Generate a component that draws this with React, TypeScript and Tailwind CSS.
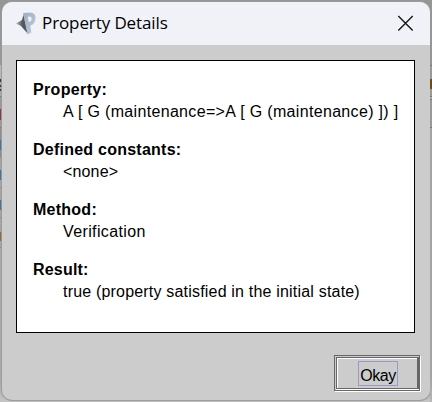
import React from "react";

const sections = [
  { title: "Property:", value: "A [ G (maintenance=>A [ G (maintenance) ]) ]", t: "tracking-[0.35px]", v: "tracking-[0.33px]" },
  { title: "Defined constants:", value: "<none>", t: "tracking-[0.24px]", v: "tracking-[0.15px]" },
  { title: "Method:", value: "Verification", t: "tracking-[0.25px]", v: "tracking-[0.38px]" },
  { title: "Result:", value: "true (property satisfied in the initial state)", t: "tracking-[0.2px]", v: "tracking-[0.19px]" },
];

const sans = "font-['Liberation_Sans',Arial,sans-serif]";

function Logo() {
  return (
    <svg width="20" height="24" viewBox="0 0 20 24" className="shrink-0">
      <defs>
        <linearGradient id="p" x1="0" y1="0" x2="1" y2="1">
          <stop offset="0" stopColor="#9fafbf" />
          <stop offset="1" stopColor="#bccbdd" />
        </linearGradient>
        <linearGradient id="shade" x1="0" y1="0" x2="1" y2="0">
          <stop offset="0" stopColor="#b4b8bc" />
          <stop offset="0.55" stopColor="#55585b" />
          <stop offset="1" stopColor="#55585b" />
        </linearGradient>
      </defs>
      <path d="M7.5 2.5 L6 8 L0 11.5 L5 14 L12 22 Z" fill="url(#shade)" />
      <path d="M7 1 L14 0.5 Q20 1 19.5 6.5 Q19 12.5 14.3 13.5 L15.3 20.5 L11.5 22.5 Z" fill="url(#p)" />
      <path d="M11.8 4.8 L13.8 4.5 Q16 5 15.7 7.4 Q15.2 9.7 12.7 10 Z" fill="#f0f1f7" />
    </svg>
  );
}

// Slivers of the parent window that stay visible on either side of the dialog.
const leftEdge =
  "bg-[linear-gradient(#969696_0_65px,#bbb_65px_79px,#333_79px_82px,#aaa_82px_85px,#333_85px_87px,#aaa_87px_89px,#333_89px_91px,#aaa_91px_96px,#777_96px_97px,#999_97px_109px,#8b3030_109px_120px,#999_120px_127px,#777_127px_128px,#8c8c8c_128px_140px,#3d6f9c_140px_150px,#8c8c8c_150px_158px,#a7a7a7_158px_170px,#3d6f9c_170px_180px,#a7a7a7_180px_187px,#888_187px_188px,#a7a7a7_188px_200px,#3d6f9c_200px_210px,#a7a7a7_210px_217px,#888_217px_218px,#a7a7a7_218px_232px,#8a6a30_232px_241px,#a7a7a7_241px_247px,#888_247px_248px,#acacac_248px_380px,#c4c4c4_402px)]";
const rightEdge =
  "bg-[linear-gradient(#969696_0_65px,#777_65px_66px,#999_66px_79px,#6b4a20_79px_89px,#999_89px_96px,#777_96px_97px,#aaa_97px_99px,#777_99px_100px,#999_100px_127px,#777_127px_128px,#a4a4a4_128px_380px,#b8b8b8_402px)]";

export default function App() {
  return (
    <div className="flex h-[402px] w-[432px] overflow-hidden bg-[#999a98]">
      <div className={`w-[2px] shrink-0 ${leftEdge}`} />
      <div className="w-[428px] shrink-0 bg-[linear-gradient(#969696_0_380px,#c4c4c4_400px)] pt-[2px]">
        <div className="flex h-[398px] w-[428px] flex-col overflow-hidden rounded-[10px] bg-[#cccccc] shadow-[0_0_1px_1px_#9b9b9b]">
          <header className="flex h-[43px] shrink-0 items-center bg-[#f1f1f8] pl-[14px] pr-[14px]">
            <Logo />
            <h1 className="ml-[6px] mt-[-1px] whitespace-nowrap font-['Open_Sans','Noto_Sans',sans-serif] text-[17px] leading-[22px] tracking-[-0.1px] text-black">
              <span>Property Details</span>
            </h1>
            <svg className="ml-auto mt-[-2px]" width="20" height="20" viewBox="0 0 20 20">
              <path d="M2.3 3 L16.7 17.4 M16.7 3 L2.3 17.4" stroke="#171719" strokeWidth="1.4" fill="none" />
            </svg>
          </header>
          <main className={`ml-[14px] mt-[15px] h-[273px] w-[399px] shrink-0 border border-black bg-white pl-[16px] pt-[18px] text-[16px] leading-[22px] text-black ${sans}`}>
            {sections.map((s) => (
              <section key={s.title} className="h-[60px] whitespace-nowrap">
                <h2 className="font-bold"><span className={s.t}>{s.title}</span></h2>
                <p className="pl-[30px]"><span className={s.v}>{s.value}</span></p>
              </section>
            ))}
          </main>
          <footer className="flex justify-end pr-[10px] pt-[22px]">
            <button className="h-[36px] w-[86px] border border-[#666] p-px pr-0 shadow-[1px_1px_#fff]">
              <span className="flex h-full w-full items-start justify-start border border-r-2 border-[#666] pl-[21px] pt-[3px] shadow-[inset_1px_1px_#fff,0_1px_#fff]">
                <span className={`flex h-[25px] w-[40px] items-center justify-center border border-[#9999cc] pt-[4px] text-[16px] leading-[18px] tracking-[-0.45px] text-black ${sans}`}>
                  <span>Okay</span>
                </span>
              </span>
            </button>
          </footer>
        </div>
      </div>
      <div className={`w-[2px] shrink-0 ${rightEdge}`} />
    </div>
  );
}
